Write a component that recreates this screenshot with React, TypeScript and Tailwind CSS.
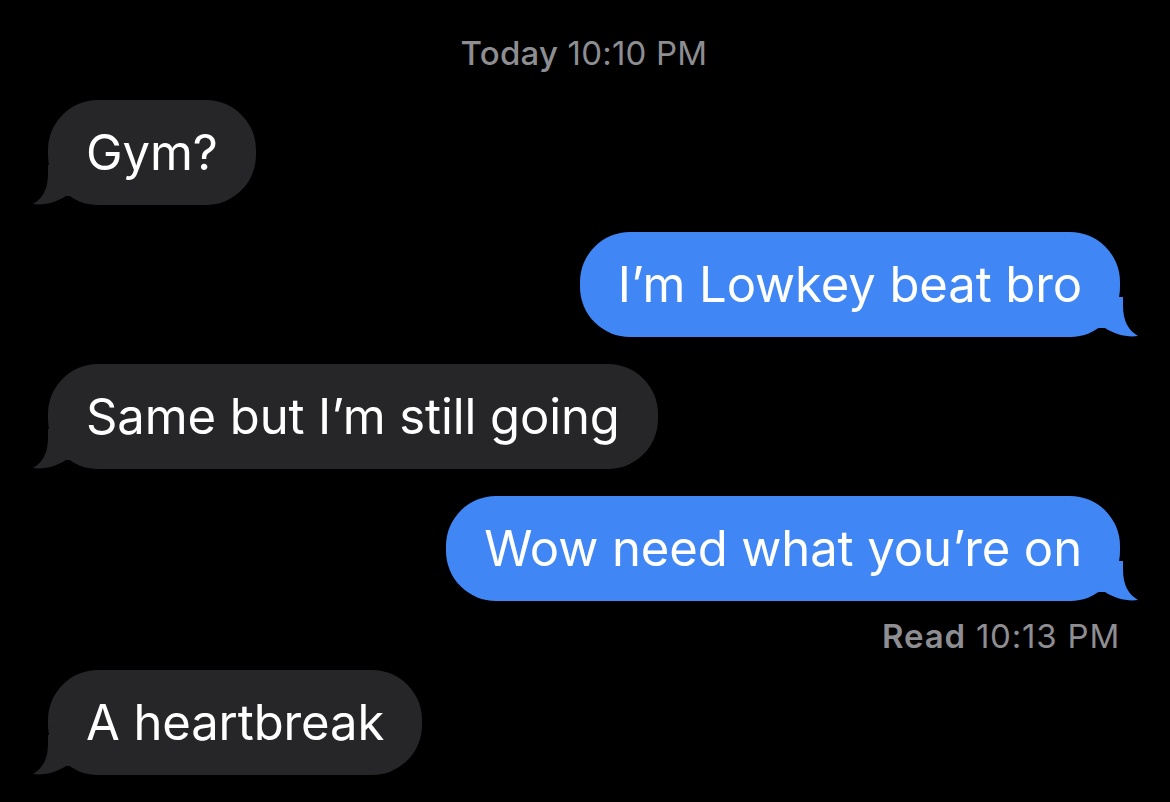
type Msg = { id: number; text: string; mine: boolean };

const messages: Msg[] = [
  { id: 1, text: 'Gym?', mine: false },
  { id: 2, text: 'I’m Lowkey beat bro', mine: true },
  { id: 3, text: 'Same but I’m still going', mine: false },
  { id: 4, text: 'Wow need what you’re on', mine: true },
  { id: 5, text: 'A heartbreak', mine: false },
];

// little curled tail under the bubble corner
function Tail({ mine }: { mine: boolean }) {
  return (
    <svg
      viewBox="0 0 40 40"
      className={`absolute bottom-0 h-[40px] w-[40px] ${
        mine ? 'right-[-19px] -scale-x-100 fill-[#4087f5]' : 'left-[-16px] fill-[#262629]'
      }`}
    >
      <path d="M16 0 L16 8 C16 24 11 33 1 39 C12 40.5 24 37.5 34 31 L40 31 L40 0 Z" />
    </svg>
  );
}

function Bubble({ msg }: { msg: Msg }) {
  return (
    <div className={`flex ${msg.mine ? 'justify-end' : 'justify-start'}`}>
      <div
        className={`relative flex h-[105px] items-center rounded-[50px] px-[38px] text-[49px] tracking-[-0.1px] text-white ${
          msg.mine ? 'bg-[#4087f5]' : 'bg-[#262629]'
        }`}
      >
        <Tail mine={msg.mine} />
        <span className="relative">{msg.text}</span>
      </div>
    </div>
  );
}

export default function App() {
  return (
    <div
      className="min-h-[802px] w-full bg-black pl-[48px] pr-[50px] pt-[34px]"
      style={{ fontFamily: 'Inter, "Noto Sans", sans-serif' }}
    >
      <div className="text-center text-[33px] leading-[38px] tracking-[0.2px] text-[#8d8d92]">
        <span className="font-medium">Today</span> 10:10 PM
      </div>
      <div className="mt-[28px] flex flex-col gap-[27px]">
        {messages.slice(0, 4).map((m) => (
          <Bubble key={m.id} msg={m} />
        ))}
      </div>
      <div className="mt-[16px] text-right text-[33px] leading-[38px] tracking-[0.8px] text-[#8d8d92]">
        <span className="font-semibold">Read</span> 10:13 PM
      </div>
      <div className="mt-[15px]">
        <Bubble msg={messages[4]} />
      </div>
    </div>
  );
}
